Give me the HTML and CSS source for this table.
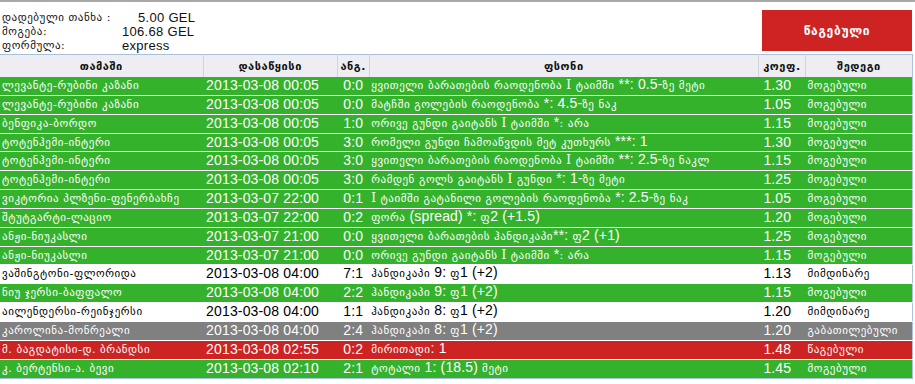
FILE: index.html
```html
<!DOCTYPE html>
<html lang="ka">
<head>
<meta charset="utf-8">
<title>ბილეთი</title>
<link rel="stylesheet" href="styles.css">
</head>
<body>
<div class="topline"></div>
<div class="summary">
  <div class="info">
    <div class="lbl">დადებული თანხა :</div><div class="val first">5.00 GEL</div>
    <div class="lbl">მოგება:</div><div class="val">106.68 GEL</div>
    <div class="lbl">ფორმულა:</div><div class="val">express</div>
  </div>
  <div class="status-btn">წაგებული</div>
</div>
<table class="bets">
  <colgroup>
    <col class="c-game"><col class="c-date"><col class="c-score"><col class="c-bet"><col class="c-coef"><col class="c-res">
  </colgroup>
  <thead>
    <tr><th>თამაში</th><th>დასაწყისი</th><th>ანგ.</th><th>ფსონი</th><th>კოეფ.</th><th>შედეგი</th></tr>
  </thead>
  <tbody>
    <tr class="win"><td>ლევანტე-რუბინი კაზანი</td><td class="d">2013-03-08 00:05</td><td class="s">0:0</td><td>ყვითელი ბარათების რაოდენობა <span class="r">I</span> ტაიმში <span class="n">**: 0.5-</span>ზე მეტი</td><td class="k">1.30</td><td>მოგებული</td></tr>
    <tr class="win"><td>ლევანტე-რუბინი კაზანი</td><td class="d">2013-03-08 00:05</td><td class="s">0:0</td><td>მატჩში გოლების რაოდენობა <span class="n">*: 4.5-</span>ზე ნაკ</td><td class="k">1.05</td><td>მოგებული</td></tr>
    <tr class="win"><td>ბენფიკა-ბორდო</td><td class="d">2013-03-08 00:05</td><td class="s">1:0</td><td>ორივე გუნდი გაიტანს <span class="r">I</span> ტაიმში <span class="n">*</span>: არა</td><td class="k">1.15</td><td>მოგებული</td></tr>
    <tr class="win"><td>ტოტენჰემი-ინტერი</td><td class="d">2013-03-08 00:05</td><td class="s">3:0</td><td>რომელი გუნდი ჩამოაწვდის მეტ კუთხურს <span class="n">***: 1</span></td><td class="k">1.30</td><td>მოგებული</td></tr>
    <tr class="win"><td>ტოტენჰემი-ინტერი</td><td class="d">2013-03-08 00:05</td><td class="s">3:0</td><td>ყვითელი ბარათების რაოდენობა <span class="r">I</span> ტაიმში <span class="n">**: 2.5-</span>ზე ნაკლ</td><td class="k">1.15</td><td>მოგებული</td></tr>
    <tr class="win"><td>ტოტენჰემი-ინტერი</td><td class="d">2013-03-08 00:05</td><td class="s">3:0</td><td>რამდენ გოლს გაიტანს <span class="r">I</span> გუნდი <span class="n">*: 1-</span>ზე მეტი</td><td class="k">1.25</td><td>მოგებული</td></tr>
    <tr class="win"><td>ვიკტორია პლზენი-ფენერბახჩე</td><td class="d">2013-03-07 22:00</td><td class="s">0:1</td><td><span class="r">I</span> ტაიმში გატანილი გოლების რაოდენობა <span class="n">*: 2.5-</span>ზე ნაკ</td><td class="k">1.05</td><td>მოგებული</td></tr>
    <tr class="win"><td>შტუტგარტი-ლაციო</td><td class="d">2013-03-07 22:00</td><td class="s">0:2</td><td>ფორა <span class="n">(spread) *:</span> ფ<span class="n">2 (+1.5)</span></td><td class="k">1.20</td><td>მოგებული</td></tr>
    <tr class="win"><td>ანჟი-ნიუკასლი</td><td class="d">2013-03-07 21:00</td><td class="s">0:0</td><td>ყვითელი ბარათების ჰანდიკაპი<span class="n">**:</span> ფ<span class="n">2 (+1)</span></td><td class="k">1.25</td><td>მოგებული</td></tr>
    <tr class="win"><td>ანჟი-ნიუკასლი</td><td class="d">2013-03-07 21:00</td><td class="s">0:0</td><td>ორივე გუნდი გაიტანს <span class="r">I</span> ტაიმში <span class="n">*</span>: არა</td><td class="k">1.15</td><td>მოგებული</td></tr>
    <tr class="open"><td>ვაშინგტონი-ფლორიდა</td><td class="d">2013-03-08 04:00</td><td class="s">7:1</td><td>ჰანდიკაპი <span class="n">9:</span> ფ<span class="n">1 (+2)</span></td><td class="k">1.13</td><td>მიმდინარე</td></tr>
    <tr class="win"><td>ნიუ ჯერსი-ბაფფალო</td><td class="d">2013-03-08 04:00</td><td class="s">2:2</td><td>ჰანდიკაპი <span class="n">9:</span> ფ<span class="n">1 (+2)</span></td><td class="k">1.15</td><td>მოგებული</td></tr>
    <tr class="open"><td>აილენდერსი-რეინჯერსი</td><td class="d">2013-03-08 04:00</td><td class="s">1:1</td><td>ჰანდიკაპი <span class="n">8:</span> ფ<span class="n">1 (+2)</span></td><td class="k">1.20</td><td>მიმდინარე</td></tr>
    <tr class="void"><td>კაროლინა-მონრეალი</td><td class="d">2013-03-08 04:00</td><td class="s">2:4</td><td>ჰანდიკაპი <span class="n">8:</span> ფ<span class="n">1 (+2)</span></td><td class="k">1.20</td><td>გაბათილებული</td></tr>
    <tr class="lost"><td>მ. ბაგდატისი-დ. ბრანდსი</td><td class="d">2013-03-08 02:55</td><td class="s">0:2</td><td>მირითადი<span class="n">: 1</span></td><td class="k">1.48</td><td>წაგებული</td></tr>
    <tr class="win"><td>კ. ბერტენსი-ა. ბევი</td><td class="d">2013-03-08 02:10</td><td class="s">2:1</td><td>ტოტალი <span class="n">1: (18.5)</span> მეტი</td><td class="k">1.45</td><td>მოგებული</td></tr>
  </tbody>
</table>
</body>
</html>
```
FILE: styles.css
```css
html, body {
  margin: 0;
  padding: 0;
  background: #ffffff;
}
body {
  font-family: "DejaVu Sans", "Noto Sans", sans-serif;
  font-size: 11px;
  letter-spacing: 0.55px;
  color: #111111;
}
.topline {
  height: 2px;
  background: #a8a8a8;
}
.summary {
  display: flex;
  align-items: flex-start;
  height: 52px;
}
.info {
  display: grid;
  grid-template-columns: 120px auto;
  padding: 9px 0 0 2px;
}
.info .lbl {
  height: 14px;
  line-height: 14px;
}
.info .val {
  height: 14px;
  font-family: "Liberation Sans", Arial, sans-serif;
  font-size: 13px;
  letter-spacing: 0.3px;
  line-height: 14px;
}
.info .val.first {
  padding-left: 16px;
}
.status-btn {
  margin: 8px 3px 0 auto;
  width: 150px;
  height: 41px;
  background: #cd2323;
  color: #ffffff;
  font-weight: bold;
  font-size: 12px;
  letter-spacing: 0.7px;
  display: flex;
  align-items: center;
  justify-content: center;
}
.bets {
  border-collapse: collapse;
  table-layout: fixed;
  width: 913px;
  border-top: 1px solid #a9c0da;
  border-right: 1px solid #a9c0da;
  border-bottom: 1px solid #a9c0da;
}
.c-game { width: 203px; }
.c-date { width: 134px; }
.c-score { width: 32px; }
.c-bet { width: 389px; }
.c-coef { width: 47px; }
.c-res { width: 107px; }
.bets th {
  height: 22px;
  padding: 0;
  background: #eeeef2;
  border-left: 1px solid #d2d2da;
  border-bottom: 0;
  font-weight: bold;
  font-size: 11px;
  color: #111111;
  text-align: center;
}
.bets th:first-child {
  border-left: 0;
}
.bets td {
  height: 17.85px;
  line-height: 17.85px;
  padding: 0 0 0 2px;
  border-bottom: 1px solid #ffffff;
  white-space: nowrap;
  overflow: hidden;
  text-align: left;
}
.bets tbody tr:last-child td {
  border-bottom: 1px solid #a9c0da;
}
.bets td.d {
  padding-left: 3px;
}
.bets td.d,
.bets td.s,
.bets td.k,
.n {
  font-family: "Liberation Sans", Arial, sans-serif;
  font-size: 14px;
  letter-spacing: 0.15px;
}
.n {
  line-height: 1;
}
.r {
  font-family: "DejaVu Serif", serif;
  font-size: 12px;
  line-height: 1;
}
.bets td.s {
  text-align: center;
  padding: 0;
}
.bets td.k {
  padding-left: 5px;
}
.win td {
  background: #35b22c;
  color: #ffffff;
}
.open td {
  background: #ffffff;
  color: #000000;
}
.void td {
  background: #808080;
  color: #ffffff;
}
.lost td {
  background: #cd2323;
  color: #ffffff;
}
```
